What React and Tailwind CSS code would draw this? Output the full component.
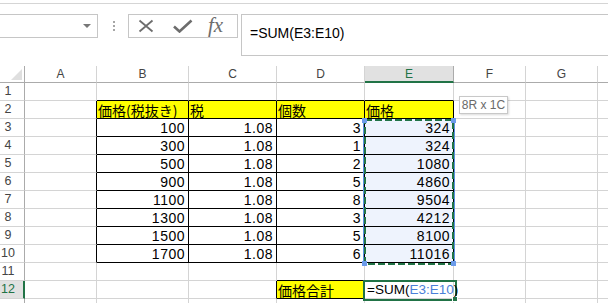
import React from "react";

const JP_FONT = { fontFamily: '"Noto Sans CJK JP", "Noto Sans", sans-serif' };
const NUM_FONT = { fontFamily: '"Liberation Sans", Arial, "Noto Sans CJK JP", sans-serif' };

// column widths include the 1px right border
const COLS = [
  { key: "#", w: "w-[25px]" },
  { key: "A", w: "w-[72px]" },
  { key: "B", w: "w-[92px]" },
  { key: "C", w: "w-[88px]" },
  { key: "D", w: "w-[88px]" },
  { key: "E", w: "w-[89px]" },
  { key: "F", w: "w-[72px]" },
  { key: "G", w: "w-[72px]" },
  { key: "H", w: "w-[72px]" },
];

const prices = [100, 300, 500, 900, 1100, 1300, 1500, 1700];
const counts = [3, 1, 2, 5, 8, 3, 5, 6];
const totals = [324, 324, 1080, 4860, 9504, 4212, 8100, 11016];

const cellValue = (row, col) => {
  if (row === 2) {
    return { B: "価格(税抜き)", C: "税", D: "個数", E: "価格" }[col];
  }
  if (row >= 3 && row <= 10) {
    const i = row - 3;
    if (col === "B") return String(prices[i]);
    if (col === "C") return "1.08";
    if (col === "D") return String(counts[i]);
    if (col === "E") return String(totals[i]);
  }
  if (row === 12 && col === "D") return "価格合計";
  return null;
};

const inTable = (row, col) => row >= 2 && row <= 10 && "BCDE".includes(col);

const cellClasses = (row, col) => {
  const black = inTable(row, col) || (row === 12 && col === "D");
  const rightBlack =
    black || (col === "A" && row >= 2 && row <= 10) || (col === "C" && row === 12);
  const bottomBlack =
    black || (row === 1 && "BCDE".includes(col)) || (row === 11 && col === "D");

  let cls = "border-r border-b ";
  cls += rightBlack ? "border-r-black " : "border-r-[#d4d4d4] ";
  cls += bottomBlack ? "border-b-black " : "border-b-[#d4d4d4] ";
  if (row === 2 && inTable(row, col)) cls += "bg-[#ffff00] ";
  else if (row === 12 && col === "D") cls += "bg-[#ffff00] ";
  else if (col === "E" && row >= 3 && row <= 10) cls += "bg-[#eef3fd] ";
  else cls += "bg-white ";
  return cls;
};

const FormulaBar = () => (
  <div className="flex items-start mt-[10px] h-[42px]">
    <div className="relative w-[98px] h-[24px] border border-l-0 border-[#c6c6c6] bg-white">
      <div className="absolute left-[83px] top-[9px] w-0 h-0 border-l-[4px] border-r-[4px] border-t-[4px] border-l-transparent border-r-transparent border-t-[#777]" />
    </div>
    <div className="w-[30px] h-[24px] flex flex-col items-center justify-center gap-[2px] pl-[1px]">
      <div className="w-[2px] h-[2px] bg-[#a6a6a6]" />
      <div className="w-[2px] h-[2px] bg-[#a6a6a6]" />
      <div className="w-[2px] h-[2px] bg-[#a6a6a6]" />
    </div>
    <div className="w-[110px] h-[24px] border border-[#c6c6c6] flex items-center bg-white">
      <svg width="16" height="14" viewBox="0 0 16 14" className="ml-[9px]">
        <path d="M1.5 1.5 L14.5 12.5 M14.5 1.5 L1.5 12.5" stroke="#6d6d6d" strokeWidth="1.8" fill="none" />
      </svg>
      <svg width="20" height="14" viewBox="0 0 20 14" className="ml-[19px]">
        <path d="M1 7.5 L6.5 12.5 L18.5 1.5" stroke="#6d6d6d" strokeWidth="2.6" fill="none" />
      </svg>
      <span
        className="ml-[15px] text-[21px] italic leading-none text-[#6d6d6d] -mt-[2px]"
        style={{ fontFamily: '"Liberation Serif", serif' }}
      >
        fx
      </span>
    </div>
    <div className="ml-[3px] flex-1 h-[42px] border border-r-0 border-[#c6c6c6] bg-white pl-[8px] pt-[5px]">
      <span className="text-[14px] text-black leading-[18px]" style={NUM_FONT}>
        =SUM(E3:E10)
      </span>
    </div>
  </div>
);

const HeaderRow = () => (
  <div className="flex h-[17px]" style={{ fontFamily: '"Liberation Sans", Arial, sans-serif' }}>
    {COLS.map((c) => {
      if (c.key === "#") {
        return (
          <div key={c.key} className={`${c.w} shrink-0 relative border-r border-b border-[#ababab] bg-white`}>
            <svg width="11" height="11" viewBox="0 0 11 11" className="absolute right-[2px] bottom-[2px]">
              <path d="M11 0 L11 11 L0 11 Z" fill="#dfdfdf" />
            </svg>
          </div>
        );
      }
      const active = c.key === "E";
      return (
        <div
          key={c.key}
          className={`${c.w} shrink-0 flex items-center justify-center text-[12px] border-r ${
            active
              ? "bg-[#e1e1e1] text-[#217346] border-b-2 border-b-[#217346] border-r-[#ababab]"
              : "bg-white text-[#444] border-b border-b-[#ababab] border-r-[#d4d4d4]"
          }`}
        >
          {c.key === "H" ? null : c.key}
        </div>
      );
    })}
  </div>
);

const Row = ({ row }) => (
  <div className="flex h-[18px]">
    {COLS.map((c) => {
      if (c.key === "#") {
        const active = row === 12;
        return (
          <div
            key={c.key}
            className={`${c.w} shrink-0 flex items-center border-b border-b-[#d4d4d4] text-[12.5px] ${
              active
                ? "bg-[#e1e1e1] text-[#217346] border-r-2 border-r-[#217346]"
                : "bg-white text-[#444] border-r border-r-[#ababab]"
            }`}
            style={{ fontFamily: '"Liberation Sans", Arial, sans-serif' }}
          >
            <span className="w-[16px] text-center">{row <= 12 ? row : null}</span>
          </div>
        );
      }
      const v = cellValue(row, c.key);
      const isNum = v !== null && v !== undefined && /^[0-9.]+$/.test(v);
      return (
        <div
          key={c.key}
          className={`${c.w} shrink-0 relative ${cellClasses(row, c.key)} text-[14px] leading-[18px] text-black whitespace-nowrap ${
            isNum ? "text-right pr-[3px] tracking-[0.5px]" : "text-left pl-[1px]"
          }`}
          style={isNum ? NUM_FONT : JP_FONT}
        >
          {v}
          {row === 12 && c.key === "E" && (
            <span className="absolute left-[2px] top-0 z-10 text-[13.5px]" style={NUM_FONT}>
              =SUM(<span className="text-[#4a7fd8]">E3:E10</span>)
            </span>
          )}
        </div>
      );
    })}
  </div>
);

const Overlays = () => (
  <>
    {/* selection E3:E10 with copy marquee */}
    <svg width="96" height="152" viewBox="0 0 96 152" className="absolute left-[361px] top-[116px]">
      <line x1="2.5" y1="4" x2="2.5" y2="148" stroke="#5a8ee0" strokeWidth="1" />
      <line x1="93.5" y1="4" x2="93.5" y2="148" stroke="#5a8ee0" strokeWidth="1" />
      <rect x="4" y="4" width="88" height="144" fill="none" stroke="#217346" strokeWidth="2" strokeDasharray="7 3" />
      <rect x="1" y="2" width="5" height="5" fill="#6c9bea" />
      <rect x="90" y="2" width="5" height="5" fill="#6c9bea" />
      <rect x="1" y="145" width="5" height="5" fill="#6c9bea" />
      <rect x="90" y="145" width="5" height="5" fill="#6c9bea" />
    </svg>

    {/* active cell E12 */}
    <div className="absolute left-[363px] top-[280px] w-[94px] h-[21px] border-2 border-[#217346]" />
    <div className="absolute left-[452px] top-[296px] w-[6px] h-[6px] bg-[#217346] border border-white" />

    {/* range size tooltip */}
    <div
      className="absolute left-[459px] top-[96px] w-[49px] h-[18px] border border-[#c8c8c8] bg-white shadow-[1px_1px_2px_rgba(0,0,0,0.15)] flex items-center justify-center text-[12px] text-[#6a6a6a]"
      style={{ fontFamily: '"Liberation Sans", Arial, sans-serif' }}
    >
      8R x 1C
    </div>
  </>
);

export default function App() {
  const rows = Array.from({ length: 13 }, (_, i) => i + 1);
  return (
    <div className="relative w-[608px] h-[303px] overflow-hidden bg-white">
      <div className="h-[4px] border-b border-[#d5d5d5]" />
      <FormulaBar />
      <div className="mt-[10px]">
        <HeaderRow />
        {rows.map((r) => (
          <Row key={r} row={r} />
        ))}
      </div>
      <Overlays />
    </div>
  );
}
